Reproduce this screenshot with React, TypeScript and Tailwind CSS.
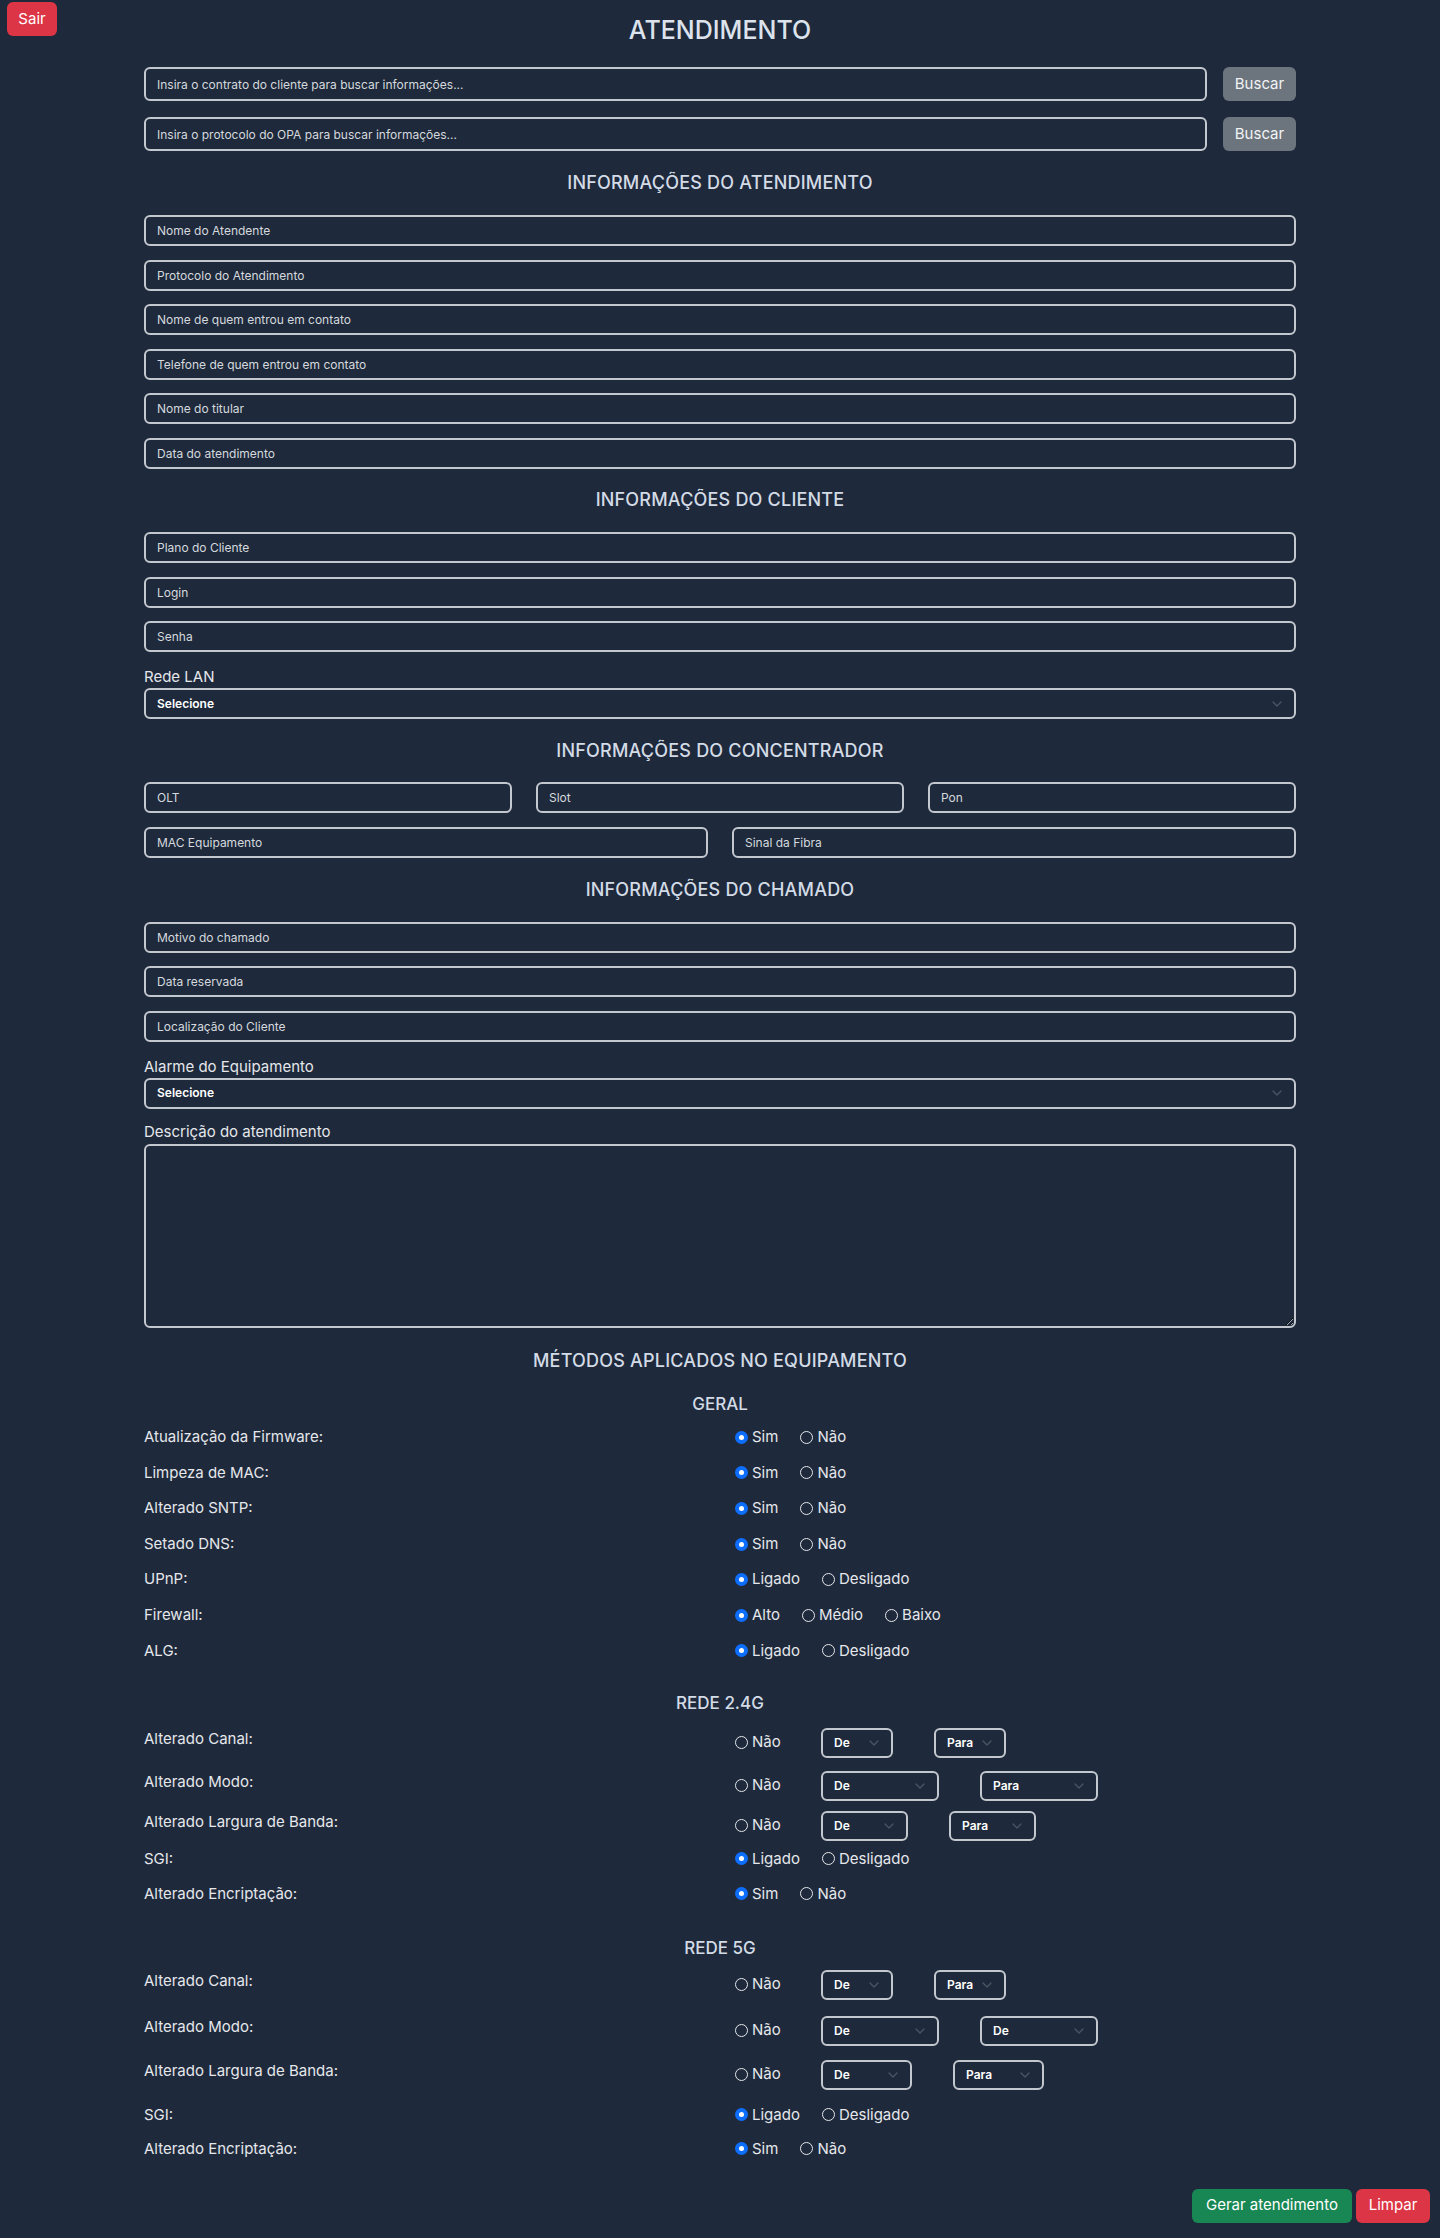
import React from "react";

const inputCls =
  "block h-[31px] w-full rounded-md border-2 border-[#c3c8cf] bg-transparent px-[11px] text-[12px] text-[#e5e7eb] outline-none placeholder:text-[#d5d9de]";

function Field({ ph }: { ph: string }) {
  return <input className={inputCls} placeholder={ph} />;
}

function Chevron() {
  return (
    <svg width="10" height="6" viewBox="0 0 10 6" fill="none" className="shrink-0">
      <path d="M1 1l4 4 4-4" stroke="#4b5563" strokeWidth="1.3" strokeLinecap="round" strokeLinejoin="round" />
    </svg>
  );
}

function SelectBox({ text, full, w }: { text: string; full?: boolean; w?: string }) {
  return (
    <div
      className={
        "flex h-[30px] items-center justify-between rounded-md border-2 border-[#c3c8cf] pl-[11px] pr-[12px] text-[12px] font-semibold text-white " +
        (full ? "w-full h-[31px]" : w ?? "")
      }
    >
      <span>{text}</span>
      <Chevron />
    </div>
  );
}

function Heading({ children, h = "h-[63px]" }: { children: React.ReactNode; h?: string }) {
  return (
    <div className={"flex items-center justify-center text-[18px] font-medium leading-[22px] tracking-[0.2px] text-[#d3dbe6] " + h}>
      {children}
    </div>
  );
}

function Radio({ checked }: { checked?: boolean }) {
  return checked ? (
    <span className="inline-flex h-[13px] w-[13px] shrink-0 items-center justify-center rounded-full bg-[#0d6efd]">
      <span className="h-[5px] w-[5px] rounded-full bg-white" />
    </span>
  ) : (
    <span className="inline-block h-[13px] w-[13px] shrink-0 rounded-full border-[1.5px] border-[#e5e7eb]" />
  );
}

function Opt({ label, checked }: { label: string; checked?: boolean }) {
  return (
    <span className="flex items-center gap-[4px]">
      <Radio checked={checked} />
      <span>{label}</span>
    </span>
  );
}

function RadioRow({ label, opts, h = "h-[35.6px]" }: { label: string; opts: [string, boolean][]; h?: string }) {
  return (
    <div className={"grid grid-cols-2 items-center text-[15px] text-[#e5e7eb] " + h}>
      <div>{label}</div>
      <div className="flex items-center gap-[22px] pl-[15px]">
        {opts.map(([l, c]) => (
          <Opt key={l} label={l} checked={c} />
        ))}
      </div>
    </div>
  );
}

function SelRow({ label, w, second = "Para", mt }: { label: string; w: string; second?: string; mt: string }) {
  return (
    <div className={"grid h-[30px] grid-cols-2 items-center text-[15px] text-[#e5e7eb] " + mt}>
      <div className="-mt-[6px]">{label}</div>
      <div className="flex items-center pl-[15px]">
        <div className="w-[86px]">
          <Opt label="Não" />
        </div>
        <SelectBox text="De" w={w} />
        <div className="ml-[41px]">
          <SelectBox text={second} w={w} />
        </div>
      </div>
    </div>
  );
}

export default function App() {
  return (
    <div className="min-h-screen bg-[#1e293b] font-[Inter,sans-serif] text-[#e5e7eb]">
      <div className="grid h-[67px] grid-cols-[1fr_auto_1fr] items-start">
        <div>
          <button className="ml-[7px] mt-[2px] h-[34px] w-[50px] rounded-md bg-[#dc3545] text-[15px] text-white">Sair</button>
        </div>
        <h1 className="mt-[15px] text-[25px] font-medium leading-[30px] text-[#dce3ec]">ATENDIMENTO</h1>
        <div />
      </div>

      <div className="mx-auto w-[1152px]">
        <div className="flex flex-col gap-[16px]">
          {["Insira o contrato do cliente para buscar informações...", "Insira o protocolo do OPA para buscar informações..."].map((p) => (
            <div key={p} className="flex items-center gap-[16px]">
              <input className={inputCls + " h-[34px]"} placeholder={p} />
              <button className="h-[34px] w-[73px] shrink-0 rounded-md bg-[#6c757d] text-[15px] text-[#f1f3f5]">Buscar</button>
            </div>
          ))}
        </div>

        <Heading h="h-[64px]">INFORMAÇÕES DO ATENDIMENTO</Heading>
        <div className="flex flex-col gap-[13.6px]">
          <Field ph="Nome do Atendente" />
          <Field ph="Protocolo do Atendimento" />
          <Field ph="Nome de quem entrou em contato" />
          <Field ph="Telefone de quem entrou em contato" />
          <Field ph="Nome do titular" />
          <Field ph="Data do atendimento" />
        </div>

        <Heading>INFORMAÇÕES DO CLIENTE</Heading>
        <div className="flex flex-col gap-[13.6px]">
          <Field ph="Plano do Cliente" />
          <Field ph="Login" />
          <Field ph="Senha" />
        </div>
        <div className="pt-[14px] text-[15px] leading-[22px] text-[#e5e7eb]">Rede LAN</div>
        <SelectBox text="Selecione" full />

        <Heading>INFORMAÇÕES DO CONCENTRADOR</Heading>
        <div className="flex flex-col gap-[14px]">
          <div className="grid grid-cols-3 gap-6">
            <Field ph="OLT" />
            <Field ph="Slot" />
            <Field ph="Pon" />
          </div>
          <div className="grid grid-cols-2 gap-6">
            <Field ph="MAC Equipamento" />
            <Field ph="Sinal da Fibra" />
          </div>
        </div>

        <Heading h="h-[64px]">INFORMAÇÕES DO CHAMADO</Heading>
        <div className="flex flex-col gap-[13.2px]">
          <Field ph="Motivo do chamado" />
          <Field ph="Data reservada" />
          <Field ph="Localização do Cliente" />
        </div>
        <div className="pt-[14px] text-[15px] leading-[22px] text-[#e5e7eb]">Alarme do Equipamento</div>
        <SelectBox text="Selecione" full />
        <div className="pt-[12px] pb-[1px] text-[15px] leading-[22px] text-[#e5e7eb]">Descrição do atendimento</div>
        <textarea className="block h-[184px] w-full rounded-md border-2 border-[#c3c8cf] bg-transparent outline-none" />

        <Heading h="h-[66px]">MÉTODOS APLICADOS NO EQUIPAMENTO</Heading>
        <div className="mb-[6px] text-center text-[17px] font-medium leading-[20px] text-[#d3dbe6]">GERAL</div>
        <RadioRow label="Atualização da Firmware:" opts={[["Sim", true], ["Não", false]]} />
        <RadioRow label="Limpeza de MAC:" opts={[["Sim", true], ["Não", false]]} />
        <RadioRow label="Alterado SNTP:" opts={[["Sim", true], ["Não", false]]} />
        <RadioRow label="Setado DNS:" opts={[["Sim", true], ["Não", false]]} />
        <RadioRow label="UPnP:" opts={[["Ligado", true], ["Desligado", false]]} />
        <RadioRow label="Firewall:" opts={[["Alto", true], ["Médio", false], ["Baixo", false]]} />
        <RadioRow label="ALG:" opts={[["Ligado", true], ["Desligado", false]]} />

        <div className="pt-[23px] pb-[14px] text-center text-[17px] font-medium leading-[22px] text-[#d3dbe6]">REDE 2.4G</div>
        <SelRow label="Alterado Canal:" w="w-[72px]" mt="" />
        <SelRow label="Alterado Modo:" w="w-[118px]" mt="mt-[13px]" />
        <SelRow label="Alterado Largura de Banda:" w="w-[87px]" mt="mt-[10px]" />
        <div className="mt-[7px]">
          <RadioRow label="SGI:" opts={[["Ligado", true], ["Desligado", false]]} h="h-[22px]" />
        </div>
        <div className="mt-[13px]">
          <RadioRow label="Alterado Encriptação:" opts={[["Sim", true], ["Não", false]]} h="h-[22px]" />
        </div>

        <div className="pt-[32px] pb-[11px] text-center text-[17px] font-medium leading-[22px] text-[#d3dbe6]">REDE 5G</div>
        <SelRow label="Alterado Canal:" w="w-[72px]" mt="" />
        <SelRow label="Alterado Modo:" w="w-[118px]" second="De" mt="mt-[16px]" />
        <SelRow label="Alterado Largura de Banda:" w="w-[91px]" mt="mt-[14px]" />
        <div className="mt-[14px]">
          <RadioRow label="SGI:" opts={[["Ligado", true], ["Desligado", false]]} h="h-[22px]" />
        </div>
        <div className="mt-[12px]">
          <RadioRow label="Alterado Encriptação:" opts={[["Sim", true], ["Não", false]]} h="h-[22px]" />
        </div>
      </div>

      <div className="flex justify-end gap-[4px] pb-[15px] pr-[10px] pt-[29px]">
        <button className="h-[34px] w-[160px] rounded-md bg-[#198754] text-[15px] text-white">Gerar atendimento</button>
        <button className="h-[34px] w-[74px] rounded-md bg-[#dc3545] text-[15px] text-white">Limpar</button>
      </div>
    </div>
  );
}
